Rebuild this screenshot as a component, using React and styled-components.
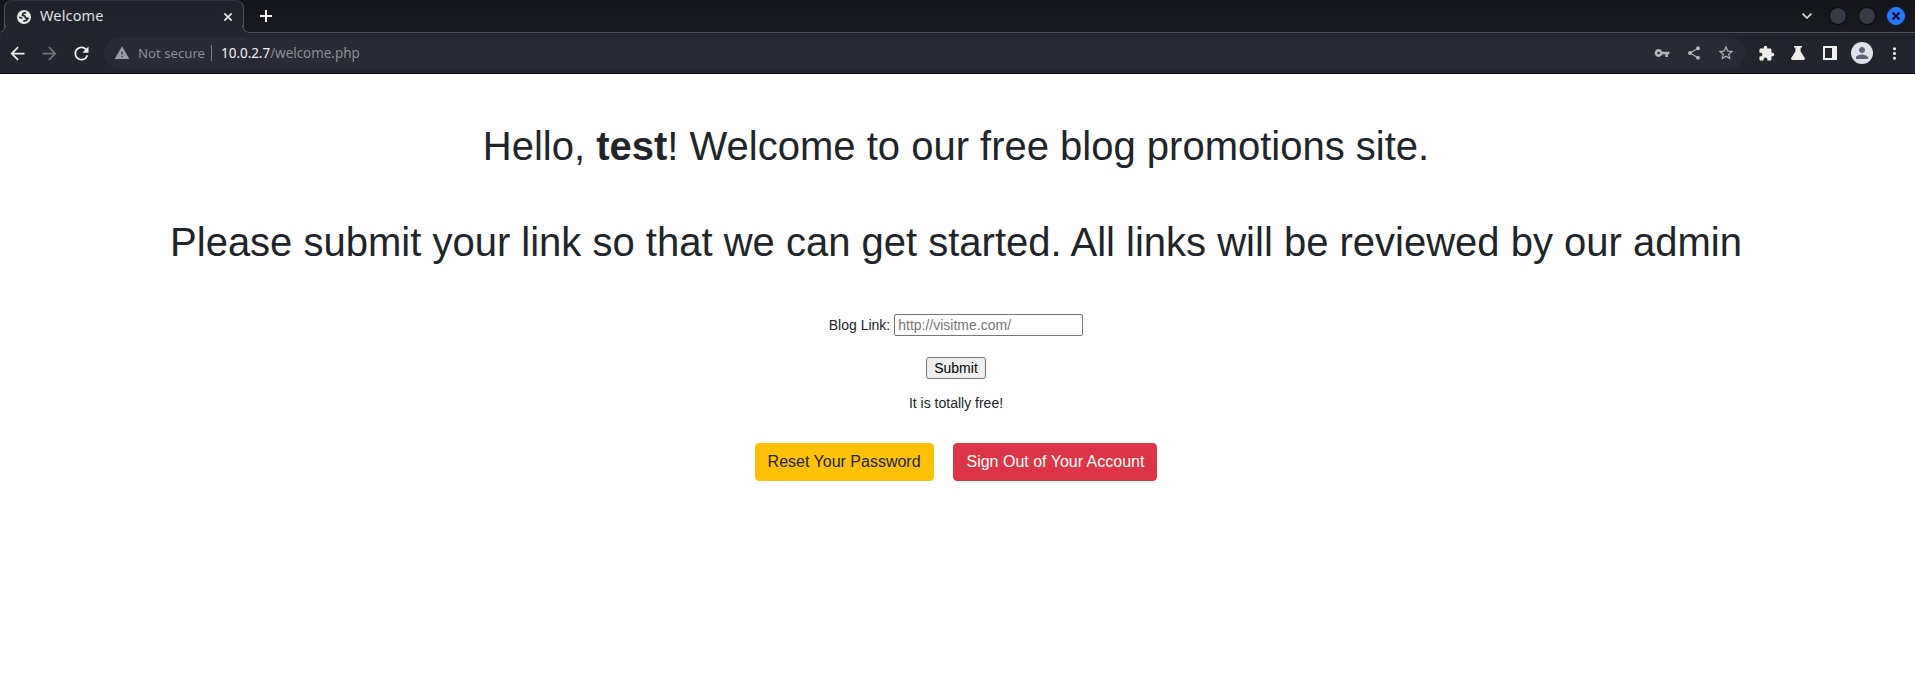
import React from 'react';
import styled, { createGlobalStyle, css } from 'styled-components';
import {
  MdArrowBack, MdArrowForward, MdRefresh, MdWarning, MdVpnKey,
  MdShare, MdStarOutline, MdExtension, MdMoreVert, MdPerson,
} from 'react-icons/md';

const GlobalStyle = createGlobalStyle`
  * { box-sizing: border-box; }
  body {
    margin: 0;
    background: #fff;
    color: #212529;
    font: 14px/1.5 "Liberation Sans", Arial, sans-serif;
    overflow: hidden;
  }
`;

const edge = '#50525a';
const surface = '#23252e';

const Chrome = styled.header`
  font-family: "Noto Sans", sans-serif;
  height: 74px;
  background: ${surface};
  border-bottom: 1px solid #07080c;
`;

const TabStrip = styled.div`
  display: flex;
  height: 33px;
  padding: 0 10px 0 4px;
  background: linear-gradient(#14151a, #1a1b20);
  border-bottom: 1px solid ${edge};
`;

const corner = css`
  content: "";
  position: absolute;
  bottom: 0;
  width: 8px;
  height: 8px;
`;

const Tab = styled.div`
  position: relative;
  display: flex;
  align-items: center;
  width: 240px;
  height: 33px;
  padding: 0 10px 1px 12px;
  background: linear-gradient(#20222b, ${surface});
  border: 1px solid ${edge};
  border-top-color: #30323b;
  border-bottom: 0;
  border-radius: 8px 8px 0 0;
  color: #dfe1e4;
  font-size: 14.5px;
  &::before {
    ${corner}
    right: 100%;
    margin-right: -1px;
    background: radial-gradient(circle at 0 0, transparent 7px, ${edge} 7.2px 7.8px, ${surface} 8px);
  }
  &::after {
    ${corner}
    left: 100%;
    margin-left: -1px;
    background: radial-gradient(circle at 100% 0, transparent 7px, ${edge} 7.2px 7.8px, ${surface} 8px);
  }
`;

const TabTitle = styled.span`
  flex: 1;
  padding-left: 9px;
  padding-bottom: 3px;
  letter-spacing: 0.15px;
  line-height: 20px;
`;

const NewTab = styled.div`
  display: grid;
  place-items: center;
  width: 44px;
  height: 32px;
`;

const WindowControls = styled.div`
  display: flex;
  align-items: center;
  gap: 11px;
  margin-left: auto;
`;

const Chevron = styled.svg`
  margin-right: 6px;
`;

const WindowButton = styled.span`
  display: grid;
  place-items: center;
  width: 18px;
  height: 18px;
  border-radius: 50%;
  border: 1px solid ${p => (p.$close ? '#2777ff' : '#07080c')};
  background: ${p => (p.$close ? '#2777ff' : '#363a46')};
`;

const Toolbar = styled.div`
  display: flex;
  align-items: center;
  height: 40px;
  padding: 0 5px 0 2px;
`;

const IconCell = styled.span`
  display: grid;
  place-items: center;
  width: 32px;
  height: 32px;
  color: ${p => p.$color || '#efefed'};
`;

const NavIcons = styled.div`
  display: flex;
  padding-right: 1px;
  margin-left: -0.5px;
`;

const AddressBar = styled.div`
  display: flex;
  align-items: center;
  flex: 1;
  height: 32px;
  margin: 0 5px 0 5.5px;
  padding: 0 3px 0 10px;
  border-radius: 16px;
  background: #282a35;
  color: #8b9096;
  font-size: 13.5px;
`;

const Security = styled.span`
  margin-left: 8px;
  padding-right: 6px;
  line-height: 16px;
  border-right: 1px solid #7b7d86;
  font-size: 13.2px;
`;

const Url = styled.span`
  flex: 1;
  margin-left: 9px;
  letter-spacing: -0.05px;
  b { color: #f2f2f2; font-weight: 400; }
`;

const Avatar = styled.span`
  display: grid;
  place-items: center;
  width: 22px;
  height: 22px;
  border-radius: 50%;
  background: #dee1e6;
  color: #5a6478;
`;

const Page = styled.main`
  width: 1912px;
  display: flow-root;
  text-align: center;
`;

const Heading = styled.h1`
  margin: 48px 0;
  font-size: 40px;
  font-weight: 400;
  line-height: 48px;
`;

const LinkForm = styled.form`
  display: flex;
  flex-direction: column;
  align-items: center;
`;

const Field = styled.label`
  display: flex;
  align-items: center;
  gap: 4px;
  height: 22px;
`;

const LinkInput = styled.input`
  width: 189px;
  height: 22px;
  padding: 1px 3px;
  border: 1px solid #767676;
  border-radius: 2px;
  font: 14px "Liberation Sans", Arial, sans-serif;
  &::placeholder { color: #757575; }
`;

const SubmitButton = styled.button`
  width: 60px;
  height: 22px;
  margin-top: 21px;
  padding: 0;
  border: 1px solid #767676;
  border-radius: 3px;
  background: #efefef;
  color: #000;
  font: 14px "Liberation Sans", Arial, sans-serif;
`;

const Note = styled.p`
  margin: 14px 0 0;
`;

const Actions = styled.div`
  display: flex;
  justify-content: center;
  gap: 19.9px;
  margin-top: 29px;
`;

const ActionLink = styled.a`
  padding: 6px 12px;
  border: 1px solid ${p => p.$fill};
  border-radius: 4px;
  background: ${p => p.$fill};
  color: ${p => p.$ink};
  font-size: 16px;
  line-height: 24px;
`;

export default function App() {
  return (
    <>
      <GlobalStyle />
      <Chrome>
        <TabStrip>
          <Tab>
            <svg width="14" height="14" viewBox="0 0 14 14">
              <circle cx="7" cy="7" r="7" fill="#e9e9e7" />
              <path
                d="M9 2.6L6.2 3.4 5.4 5.4 8 6 8.4 7.8 11 8.4 9.4 10.4 6.2 11.2M2 7.2l3.4 1"
                fill="none"
                stroke={surface}
                strokeWidth="1.7"
                strokeLinejoin="round"
              />
            </svg>
            <TabTitle>Welcome</TabTitle>
            <svg width="10" height="10" viewBox="0 0 10 10" stroke="#e6e7ea" strokeWidth="1.7">
              <path d="M1.3 1.3l7.4 7.4M8.7 1.3L1.3 8.7" />
            </svg>
          </Tab>
          <NewTab>
            <svg width="12" height="12" viewBox="0 0 12 12" stroke="#efefed" strokeWidth="2">
              <path d="M6 0v12M0 6h12" />
            </svg>
          </NewTab>
          <WindowControls>
            <Chevron width="10" height="6" viewBox="0 0 10 6" fill="none" stroke="#dcdcda" strokeWidth="1.7">
              <path d="M.6.6L5 5 9.4.6" />
            </Chevron>
            <WindowButton />
            <WindowButton />
            <WindowButton $close>
              <svg width="8" height="8" viewBox="0 0 8 8" stroke="#0b1020" strokeWidth="2">
                <path d="M.5.5l7 7M7.5.5l-7 7" />
              </svg>
            </WindowButton>
          </WindowControls>
        </TabStrip>
        <Toolbar>
          <NavIcons>
            <IconCell><MdArrowBack size={21} /></IconCell>
            <IconCell $color="#73757d"><MdArrowForward size={21} /></IconCell>
            <IconCell><MdRefresh size={21} /></IconCell>
          </NavIcons>
          <AddressBar>
            <MdWarning size={16} color="#9a9ca6" />
            <Security>Not secure</Security>
            <Url><b>10.0.2.7</b>/welcome.php</Url>
            <IconCell $color="#b4b5b8"><MdVpnKey size={16} /></IconCell>
            <IconCell $color="#b4b5b8"><MdShare size={16} /></IconCell>
            <IconCell $color="#b4b5b8"><MdStarOutline size={18} /></IconCell>
          </AddressBar>
          <IconCell><MdExtension size={17} /></IconCell>
          <IconCell>
            <svg width="14" height="14" viewBox="0 0 14 14" fill="currentColor">
              <path d="M3 0h8v1.6H9.6v4L13.8 12q.6 2-1.3 2h-11Q-.4 14 .2 12L4.4 5.6v-4H3z" />
            </svg>
          </IconCell>
          <IconCell>
            <svg width="14" height="14" viewBox="0 0 14 14" fill="currentColor">
              <path fillRule="evenodd" d="M0 0h14v14H0zM2 2v10h7V2z" />
            </svg>
          </IconCell>
          <IconCell><Avatar><MdPerson size={18} /></Avatar></IconCell>
          <IconCell><MdMoreVert size={19} /></IconCell>
        </Toolbar>
      </Chrome>
      <Page>
        <Heading>Hello, <b>test</b>! Welcome to our free blog promotions site.</Heading>
        <Heading>Please submit your link so that we can get started. All links will be reviewed by our admin</Heading>
        <LinkForm>
          <Field>Blog Link: <LinkInput placeholder="http://visitme.com/" /></Field>
          <SubmitButton type="button">Submit</SubmitButton>
        </LinkForm>
        <Note>It is totally free!</Note>
        <Actions>
          <ActionLink $fill="#ffc107" $ink="#212529">Reset Your Password</ActionLink>
          <ActionLink $fill="#dc3545" $ink="#fff">Sign Out of Your Account</ActionLink>
        </Actions>
      </Page>
    </>
  );
}
